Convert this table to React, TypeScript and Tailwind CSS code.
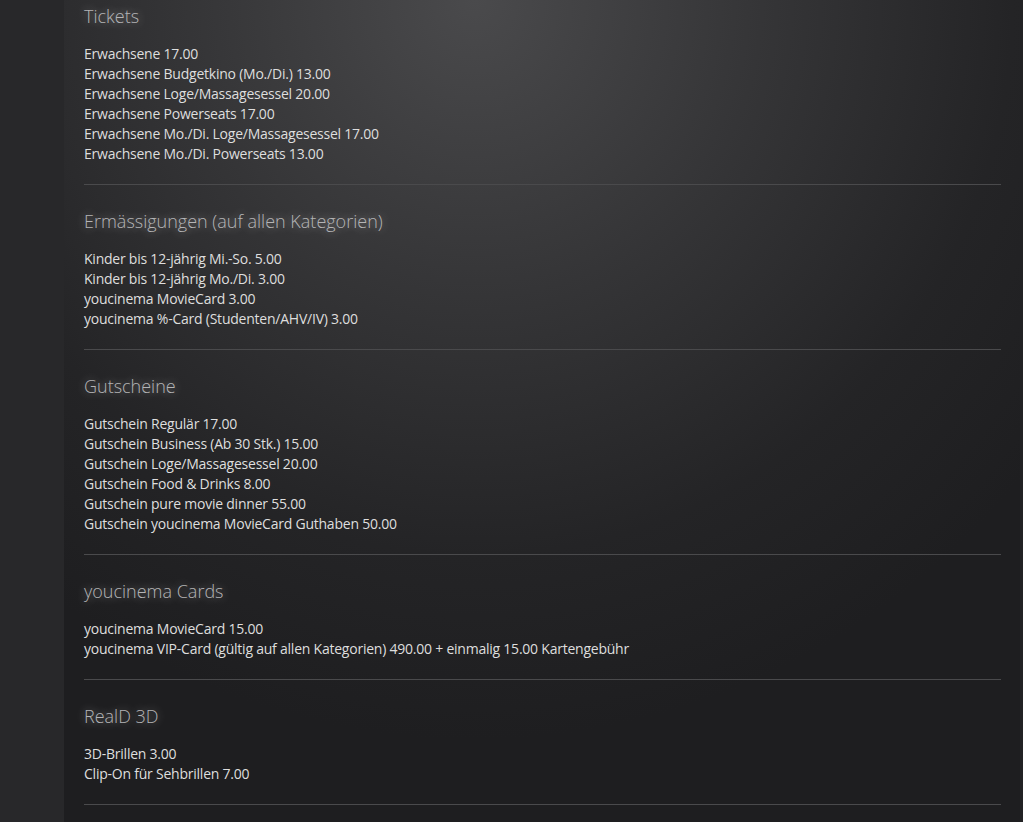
import React from "react";

const sections: { title: string; items: string[] }[] = [
  {
    title: "Tickets",
    items: [
      "Erwachsene 17.00",
      "Erwachsene Budgetkino (Mo./Di.) 13.00",
      "Erwachsene Loge/Massagesessel 20.00",
      "Erwachsene Powerseats 17.00",
      "Erwachsene Mo./Di. Loge/Massagesessel 17.00",
      "Erwachsene Mo./Di. Powerseats 13.00",
    ],
  },
  {
    title: "Ermässigungen (auf allen Kategorien)",
    items: [
      "Kinder bis 12-jährig Mi.-So. 5.00",
      "Kinder bis 12-jährig Mo./Di. 3.00",
      "youcinema MovieCard 3.00",
      "youcinema %-Card (Studenten/AHV/IV) 3.00",
    ],
  },
  {
    title: "Gutscheine",
    items: [
      "Gutschein Regulär 17.00",
      "Gutschein Business (Ab 30 Stk.) 15.00",
      "Gutschein Loge/Massagesessel 20.00",
      "Gutschein Food & Drinks 8.00",
      "Gutschein pure movie dinner 55.00",
      "Gutschein youcinema MovieCard Guthaben 50.00",
    ],
  },
  {
    title: "youcinema Cards",
    items: [
      "youcinema MovieCard 15.00",
      "youcinema VIP-Card (gültig auf allen Kategorien) 490.00 + einmalig 15.00 Kartengebühr",
    ],
  },
  {
    title: "RealD 3D",
    items: ["3D-Brillen 3.00", "Clip-On für Sehbrillen 7.00"],
  },
];

export default function App() {
  return (
    <div
      className="flex h-[822px] w-full overflow-hidden bg-[#262628]"
      style={{ fontFamily: '"Open Sans", "Noto Sans", sans-serif' }}
    >
      <div className="w-[64px] shrink-0 bg-[#28282a]" />
      <div className="flex-1 border-r-[3px] border-[#222224] bg-[radial-gradient(ellipse_75%_90%_at_43%_0%,#4a4a4c_0%,#353537_40%,#242426_75%,#1e1e20_100%)] pl-[20px] pr-[19px] pt-[4px]">
        {sections.map((s) => (
          <div key={s.title}>
            <h2 className="text-[18px] font-light leading-[24px] text-[#b4b4b6] [text-shadow:0_0_10px_rgba(255,255,255,0.45)]">
              {s.title}
            </h2>
            <ul className="mt-[16px] text-[14px] leading-[20px] tracking-[-0.23px] text-[#dedede]">
              {s.items.map((it) => (
                <li key={it}>{it}</li>
              ))}
            </ul>
            <div className="mb-[24px] mt-[20px] h-px bg-[#4a4a4c]" />
          </div>
        ))}
      </div>
    </div>
  );
}
